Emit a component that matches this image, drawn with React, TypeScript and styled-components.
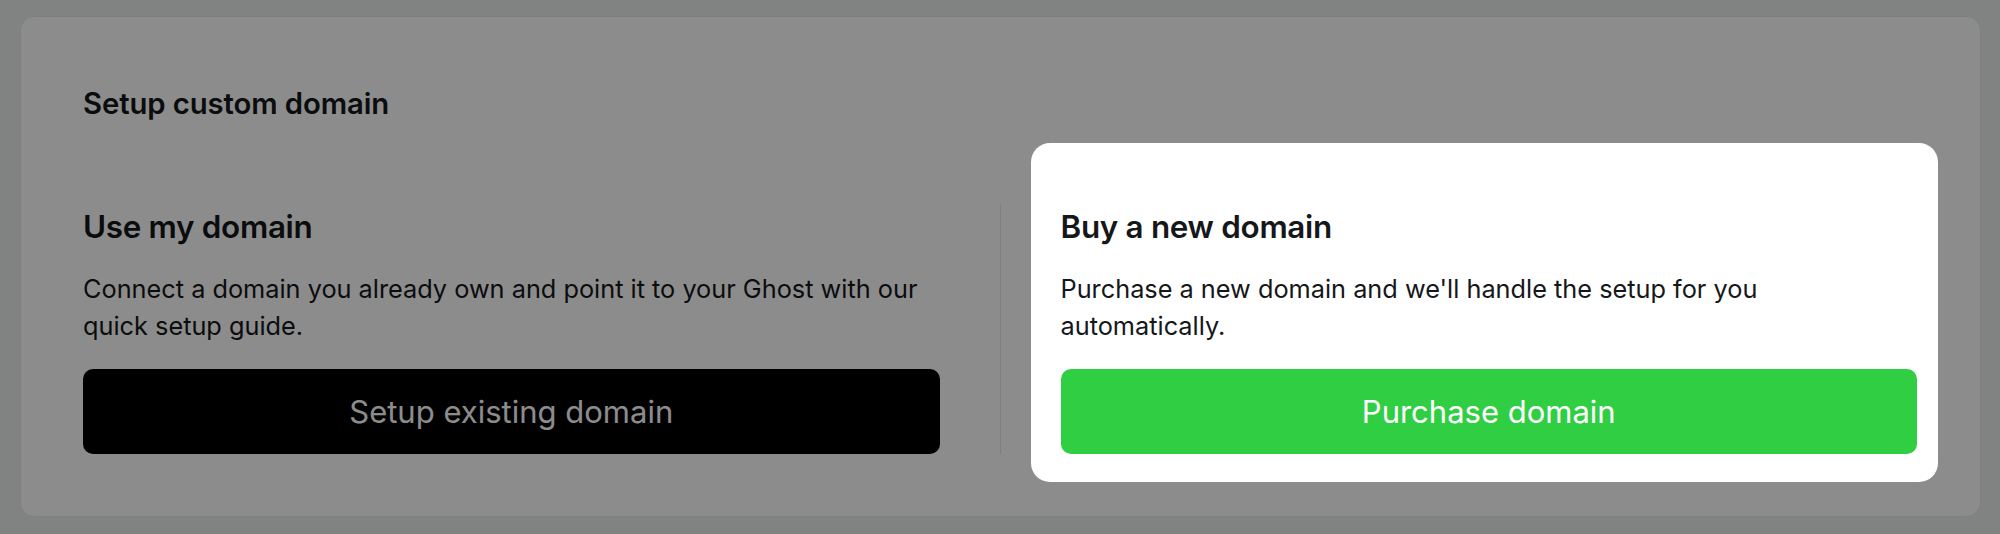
import React from 'react';
import styled, { createGlobalStyle } from 'styled-components';

const GlobalStyle = createGlobalStyle`
  html, body {
    margin: 0;
    padding: 0;
    background: #eceeef;
    font-family: Inter, "Noto Sans", sans-serif;
    -webkit-font-smoothing: antialiased;
  }
`;

const Page = styled.div`
  padding: 16px 19px 19px 20px;
`;

const Overlay = styled.div`
  position: fixed;
  inset: 0;
  background: rgba(0, 0, 0, 0.45);
  z-index: 1;
`;

const Card = styled.section`
  background: #ffffff;
  border: 1px solid #e3e8ec;
  border-radius: 14px;
  padding: 68px 63px 62px 62px;
`;

const Title = styled.h2`
  margin: 0;
  font-size: 29.3px;
  line-height: 38px;
  font-weight: 600;
  color: #15171a;
  letter-spacing: -0.1px;
`;

const Columns = styled.div`
  display: grid;
  grid-template-columns: 1fr 1px 1fr;
  column-gap: 60px;
  margin-top: 81px;
`;

const Divider = styled.div`
  background: #e6ebef;
`;

const Option = styled.div<{ $spotlight?: boolean }>`
  display: flex;
  flex-direction: column;
  ${({ $spotlight }) => $spotlight && `
    position: relative;
    z-index: 2;
    background: #ffffff;
    border-radius: 19px;
    margin: -61px -21px -28px -30px;
    padding: 61px 21px 28px 30px;
  `}
`;

const Heading = styled.h3`
  margin: 0;
  font-size: 31.4px;
  line-height: 46px;
  font-weight: 600;
  color: #15171a;
  letter-spacing: -0.3px;
`;

const Text = styled.p`
  margin: 20px 0 0 0;
  font-size: 25.3px;
  line-height: 37px;
  font-weight: 400;
  color: #15171a;
`;

const Button = styled.button<{ $variant: 'dark' | 'green' }>`
  margin-top: 25px;
  height: 85px;
  border: 0;
  border-radius: 10px;
  font-family: inherit;
  font-size: 31px;
  font-weight: 400;
  color: #ffffff;
  background: ${({ $variant }) => ($variant === 'green' ? '#30cf43' : '#000000')};
  cursor: pointer;
`;

export default function App(): React.ReactElement {
  return (
    <>
      <GlobalStyle />
      <Page>
        <Card>
          <Title>Setup custom domain</Title>
          <Columns>
            <Option>
              <Heading>Use my domain</Heading>
              <Text>Connect a domain you already own and point it to your Ghost with our quick setup guide.</Text>
              <Button $variant='dark' type='button'>Setup existing domain</Button>
            </Option>
            <Divider />
            <Option $spotlight>
              <Heading>Buy a new domain</Heading>
              <Text>Purchase a new domain and we'll handle the setup for you automatically.</Text>
              <Button $variant='green' type='button'>Purchase domain</Button>
            </Option>
          </Columns>
        </Card>
      </Page>
      <Overlay />
    </>
  );
}
